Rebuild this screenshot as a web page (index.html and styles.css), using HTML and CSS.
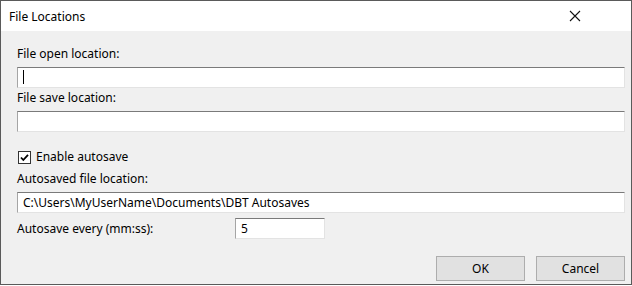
FILE: index.html
```html
<!DOCTYPE html>
<html lang="en">

<head>
	<meta charset="UTF-8">
	<title>File Locations</title>
	<link rel="stylesheet" href="styles.css">
</head>

<body>
	<div class="window">
		<div class="titlebar">
			<span class="title">File Locations</span>
			<svg class="close" width="12" height="12" viewBox="0 0 12 12">
				<path d="M1 1 L11 11 M11 1 L1 11" stroke="#111" stroke-width="1.1" fill="none"/>
			</svg>
		</div>
		<div class="content">
			<label class="label first">File open location:</label>
			<div class="field"><span class="caret"></span></div>
			<label class="label">File save location:</label>
			<div class="field"></div>
			<div class="check-row">
				<svg class="checkbox" width="13" height="13" viewBox="0 0 13 13">
					<rect x="0.5" y="0.5" width="12" height="12" fill="#fff" stroke="#333"/>
					<path d="M3 6.5 L5.3 9 L10 3.8" stroke="#000" stroke-width="1.8" fill="none"/>
				</svg>
				<span>Enable autosave</span>
			</div>
			<label class="label after-check">Autosaved file location:</label>
			<div class="field">C:\Users\MyUserName\Documents\DBT Autosaves</div>
			<div class="interval-row">
				<span class="interval-label">Autosave every (mm:ss):</span>
				<div class="field short">5</div>
			</div>
			<div class="buttons">
				<button class="btn">OK</button>
				<button class="btn">Cancel</button>
			</div>
		</div>
	</div>
</body>

</html>
```

FILE: styles.css
```css
html, body {
	margin: 0;
	padding: 0;
}

body {
	width: 632px;
	height: 286px;
	overflow: hidden;
	font-family: "Noto Sans", "Open Sans", sans-serif;
	font-size: 12px;
	color: #000;
	background: #fff;
}

.window {
	box-sizing: border-box;
	width: 632px;
	height: 285px;
	border: 1px solid #5a5a5a;
	display: flex;
	flex-direction: column;
	background: #f0f0f0;
}

.titlebar {
	height: 30px;
	background: #fff;
	display: flex;
	align-items: center;
	justify-content: space-between;
	padding: 0 50px 0 8px;
	flex-shrink: 0;
}

.title {
	font-size: 12px;
}

.content {
	padding: 15px 6px 0 16px;
	display: flex;
	flex-direction: column;
}

.label {
	display: block;
	height: 16px;
	line-height: 16px;
	margin-top: 2px;
	margin-bottom: 5px;
}

.label.first {
	margin-top: 0;
}

.label.after-check {
	margin-top: 1px;
}

.field {
	box-sizing: border-box;
	height: 21px;
	background: #fff;
	border: 1px solid;
	border-color: #7a7a7a #e3e3e3 #e3e3e3 #a5a5a5;
	padding: 0 5px;
	line-height: 19px;
	position: relative;
}

.caret {
	position: absolute;
	left: 5px;
	top: 2px;
	width: 1px;
	height: 14px;
	background: #000;
}

.check-row {
	display: flex;
	align-items: center;
	gap: 5px;
	height: 16px;
	margin-top: 17px;
	margin-bottom: 5px;
	line-height: 16px;
}

.checkbox {
	margin-left: 1px;
	flex-shrink: 0;
}

.interval-row {
	display: flex;
	align-items: center;
	margin-top: 5px;
}

.interval-label {
	width: 218px;
}

.field.short {
	width: 90px;
}

.buttons {
	display: flex;
	justify-content: flex-end;
	gap: 11px;
	margin-top: 17px;
}

.btn {
	box-sizing: border-box;
	width: 89px;
	height: 25px;
	background: #e1e1e1;
	border: 1px solid #adadad;
	font-family: inherit;
	font-size: 12px;
	color: #000;
	padding: 0;
}
```
